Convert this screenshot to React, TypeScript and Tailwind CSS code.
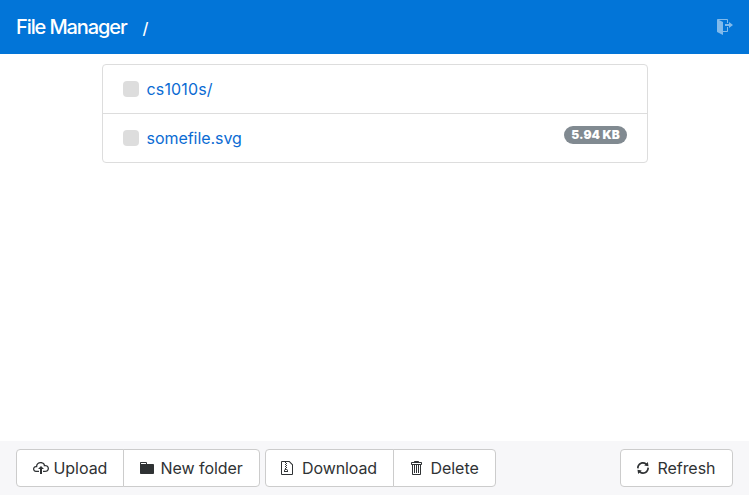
import type { ReactNode } from "react";

type IconProps = { d: string; width: number; className?: string };

const paths = {
  upload:
    "M7 9H5l3-3 3 3H9v5H7V9zm5-4c0-.44-.91-3-4.5-3C5.08 2 3 3.92 3 6 1.02 6 0 7.52 0 9c0 1.53 1 3 3 3h3v-1.3H3c-1.62 0-1.7-1.42-1.7-1.7 0-.17.05-1.7 1.7-1.7h1.3V6c0-1.39 1.56-2.7 3.2-2.7 2.55 0 3.13 1.55 3.2 1.8v1.2H12c.81 0 2.7.22 2.7 2.2 0 2.09-2.25 2.2-2.7 2.2h-2V12h2c2.08 0 4-1.16 4-3.5C16 6.06 14.08 5 12 5z",
  folder:
    "M13 4H7V3c0-.66-.31-1-1-1H1c-.55 0-1 .45-1 1v10c0 .55.45 1 1 1h12c.55 0 1-.45 1-1V5c0-.55-.45-1-1-1zM6 4H1V3h5v1z",
  zip: "M8.5 1H1a1 1 0 0 0-1 1v12a1 1 0 0 0 1 1h10a1 1 0 0 0 1-1V4.5L8.5 1zM11 14H1V2h3v1h1V2h3l3 3v9zM5 4V3h1v1H5zM4 4h1v1H4V4zm1 2V5h1v1H5zM4 6h1v1H4V6zm1 2V7h1v1H5zM4 9.28A2 2 0 0 0 3 11v1h4v-1a2 2 0 0 0-2-2V8H4v1.28zM6 10v1H4v-1h2z",
  trash:
    "M11 2H9c0-.55-.45-1-1-1H5c-.55 0-1 .45-1 1H2c-.55 0-1 .45-1 1v1c0 .55.45 1 1 1v9c0 .55.45 1 1 1h7c.55 0 1-.45 1-1V5c.55 0 1-.45 1-1V3c0-.55-.45-1-1-1zm-1 12H3V5h1v8h1V5h1v8h1V5h1v8h1V5h1v9zm1-10H2V3h9v1z",
  sync: "M10.24 7.4a4.15 4.15 0 0 1-1.2 3.6 4.346 4.346 0 0 1-5.41.54L4.8 10.4.5 9.8l.6 4.2 1.31-1.26c2.36 1.74 5.7 1.57 7.84-.54a5.876 5.876 0 0 0 1.74-4.46l-1.75-.34zM2.96 5a4.346 4.346 0 0 1 5.41-.54L7.2 5.6l4.3.6-.6-4.2-1.31 1.26c-2.36-1.74-5.7-1.57-7.85.54C.5 5.03-.06 6.65.01 8.26l1.75.35A4.17 4.17 0 0 1 2.96 5z",
  signOut:
    "M12 9V7H8V5h4V3l4 3-4 3zm-2 3H6V3L2 1h8v3h1V1c0-.55-.45-1-1-1H1C.45 0 0 .45 0 1v11.38c0 .39.22.73.55.91L6 16.01V13h4c.55 0 1-.45 1-1V8h-1v4z",
};

function Icon({ d, width, className = "" }: IconProps) {
  return (
    <svg
      width={width}
      height={16}
      viewBox={`0 0 ${width} 16`}
      fill="currentColor"
      className={`shrink-0 ${className}`}
      aria-hidden="true"
    >
      <path fillRule="evenodd" d={d} />
    </svg>
  );
}

function Button({ className, children }: { className: string; children: ReactNode }) {
  return (
    <button
      className={`flex h-[38px] items-center border border-[#ccc] bg-white pl-4 tracking-[-0.05px] whitespace-nowrap ${className}`}
    >
      {children}
    </button>
  );
}

function FileRow({ name, size, className }: { name: string; size?: string; className: string }) {
  return (
    <li className={`flex items-center px-5 ${className}`}>
      <span className="mr-[7.5px] size-4 rounded bg-[#ddd]" />
      <a href="#" className="text-[#0b6bd3]">
        {name}
      </a>
      {size && (
        <span className="mb-1.5 ml-auto flex h-[18px] w-[63px] items-center justify-center rounded-full bg-[#818a91] text-[12px] leading-none font-black tracking-[0.05px] whitespace-nowrap text-white">
          {size}
        </span>
      )}
    </li>
  );
}

export default function App() {
  return (
    <div className="flex h-screen flex-col bg-white font-['Inter','Liberation_Sans',sans-serif] text-base text-[#2f3234]">
      <header className="flex h-[54px] shrink-0 items-center bg-[#0275d8] px-4 text-white">
        <span className="w-[126.5px] text-[20px] font-medium tracking-[-1.1px]">File Manager</span>
        <span className="pt-0.5 text-base font-medium">/</span>
        <Icon d={paths.signOut} width={16} className="ml-auto opacity-50" />
      </header>

      <main className="flex-1 px-[102px] pt-2.5">
        <ul className="w-[546px] rounded border border-[#ddd]">
          <FileRow name="cs1010s/" className="h-[49px] border-b border-[#ddd] tracking-[0.15px]" />
          <FileRow name="somefile.svg" size="5.94 KB" className="h-[48px] tracking-[-0.05px]" />
        </ul>
      </main>

      <footer className="flex h-[54px] shrink-0 items-center bg-[#f7f7f9] px-4">
        <Button className="w-[108px] rounded-l">
          <Icon d={paths.upload} width={16} className="mr-[4.5px]" />
          Upload
        </Button>
        <Button className="-ml-px w-[137px] rounded-r">
          <Icon d={paths.folder} width={14} className="mr-[6.5px]" />
          New folder
        </Button>
        <Button className="ml-[5px] w-[129px] rounded-l">
          <Icon d={paths.zip} width={12} className="mr-2 -ml-px" />
          <span className="pl-px tracking-[-0.1px]">Download</span>
        </Button>
        <Button className="-ml-px w-[103px] rounded-r">
          <Icon d={paths.trash} width={12} className="mr-[8.5px]" />
          Delete
        </Button>
        <Button className="ml-auto w-[113px] rounded">
          <Icon d={paths.sync} width={12} className="mr-[8.5px]" />
          Refresh
        </Button>
      </footer>
    </div>
  );
}
